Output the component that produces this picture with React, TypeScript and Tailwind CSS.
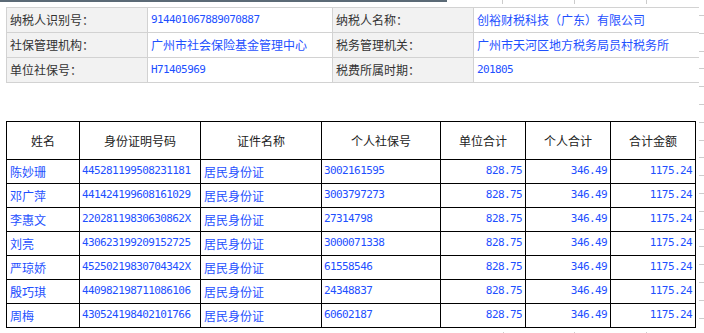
const cjk = "font-['Noto_Sans_CJK_SC','Noto_Sans',sans-serif]";
const mono = "font-['DejaVu_Sans_Mono','Noto_Sans_CJK_SC',monospace] text-[11px] tracking-[-0.6px]";

type InfoCell = { label: string; value: string; num?: boolean };

const info: [InfoCell, InfoCell][] = [
  [
    { label: "纳税人识别号：", value: "914401067889070887", num: true },
    { label: "纳税人名称：", value: "创裕财税科技（广东）有限公司" },
  ],
  [
    { label: "社保管理机构：", value: "广州市社会保险基金管理中心" },
    { label: "税务管理机关：", value: "广州市天河区地方税务局员村税务所" },
  ],
  [
    { label: "单位社保号：", value: "H71405969", num: true },
    { label: "税费所属时期：", value: "201805", num: true },
  ],
];

type Person = { name: string; id: string; sb: string };

const people: Person[] = [
  { name: "陈妙珊", id: "445281199508231181", sb: "3002161595" },
  { name: "邓广萍", id: "441424199608161029", sb: "3003797273" },
  { name: "李惠文", id: "22028119830630862X", sb: "27314798" },
  { name: "刘亮", id: "430623199209152725", sb: "3000071338" },
  { name: "严琼娇", id: "45250219830704342X", sb: "61558546" },
  { name: "殷巧琪", id: "440982198711086106", sb: "24348837" },
  { name: "周梅", id: "430524198402101766", sb: "60602187" },
];

const headers = ["姓名", "身份证明号码", "证件名称", "个人社保号", "单位合计", "个人合计", "合计金额"];

const blue = "text-[#1e50ff]";

export default function App() {
  return (
    <div className="flex w-[704px] h-[333px] overflow-hidden bg-white">
      <div className="w-[699px] shrink-0">
        {/* top strip */}
        <div className="flex h-[7px] items-start">
          <div className="w-[447px] h-[2px] bg-[#5b6a76]" />
          <div className="ml-[55px] w-px h-[4px] bg-[#cccccc]" />
          <div className="ml-[71px] w-px h-[4px] bg-[#cccccc]" />
          <div className="ml-[71px] w-px h-[4px] bg-[#cccccc]" />
        </div>

        {/* info table */}
        <div className={`ml-[6px] w-[693px] grid grid-cols-[140px_184px_140px_225px] auto-rows-[24px] gap-px bg-[#d2d2d2] pt-px pl-px pb-px ${cjk} text-[12px]`}>
          {info.map((row, i) =>
            row.map((c, j) => [
              <div key={`l${i}${j}`} className="flex items-center bg-[#f2f2f2] pl-[3px] text-[#333333]">
                {c.label}
              </div>,
              <div key={`v${i}${j}`} className={`flex items-center bg-white pl-[3px] ${blue} ${c.num ? mono : ""}`}>
                {c.value}
              </div>,
            ])
          )}
        </div>

        {/* detail table */}
        <div className={`mt-[38px] ml-[6px] w-[690px] grid grid-cols-[72px_120px_120px_118px_84px_84px_84px] gap-px bg-black p-px ${cjk} text-[12px]`}>
          {headers.map((h) => (
            <div key={h} className="flex h-[37px] items-center justify-center bg-white text-[#222222]">
              {h}
            </div>
          ))}
          {people.map((p) => [
            <div key={p.name + "n"} className={`flex h-[23px] items-center bg-white pl-[3px] ${blue}`}>{p.name}</div>,
            <div key={p.name + "i"} className={`flex h-[23px] items-center bg-white pl-[2px] ${blue} ${mono}`}>{p.id}</div>,
            <div key={p.name + "t"} className={`flex h-[23px] items-center bg-white pl-[3px] ${blue}`}>居民身份证</div>,
            <div key={p.name + "s"} className={`flex h-[23px] items-center bg-white pl-[2px] ${blue} ${mono}`}>{p.sb}</div>,
            <div key={p.name + "a"} className={`flex h-[23px] items-center justify-end bg-white pr-[3px] ${blue} ${mono}`}>828.75</div>,
            <div key={p.name + "b"} className={`flex h-[23px] items-center justify-end bg-white pr-[3px] ${blue} ${mono}`}>346.49</div>,
            <div key={p.name + "c"} className={`flex h-[23px] items-center justify-end bg-white pr-[3px] ${blue} ${mono}`}>1175.24</div>,
          ])}
        </div>

        {/* bottom dots */}
        <div className="flex mt-[4px]">
          <div className="ml-[503px] w-px h-[2px] bg-[#cccccc]" />
          <div className="ml-[70px] w-px h-[2px] bg-[#cccccc]" />
          <div className="ml-[71px] w-px h-[2px] bg-[#cccccc]" />
        </div>
      </div>

      {/* right ruler ticks */}
      <div className="flex flex-col gap-[16.8px] pt-[15px] w-[5px]">
        {Array.from({ length: 18 }).map((_, i) => (
          <div key={i} className="h-px w-[5px] bg-[#cccccc]" />
        ))}
      </div>
    </div>
  );
}
